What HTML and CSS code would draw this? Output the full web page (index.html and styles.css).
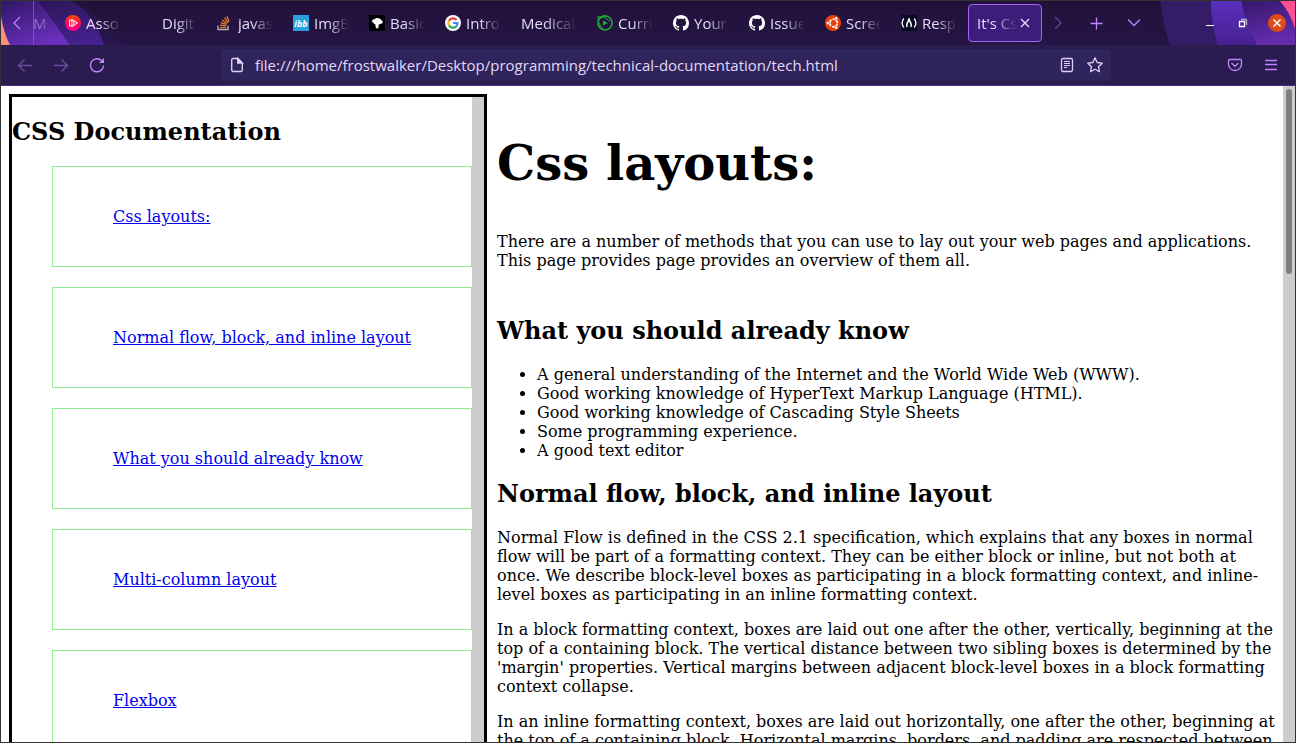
FILE: index.html
```html
<!DOCTYPE html>
<html lang="en">
<head>
<meta charset="utf-8">
<title>It's Css</title>
<link rel="stylesheet" href="styles.css">
</head>
<body>
<div class="window">
  <header class="tabbar">
    <svg class="art art-left" width="130" height="44" viewBox="1 1 130 44" aria-hidden="true">
      <defs>
        <linearGradient id="a" x1="0" y1="0" x2="0.6" y2="1"><stop offset="0" stop-color="#2e1765"/><stop offset="1" stop-color="#6b2fbd"/></linearGradient>
        <linearGradient id="b" x1="0" y1="0" x2="0.5" y2="1"><stop offset="0" stop-color="#2c1557"/><stop offset="1" stop-color="#44218c"/></linearGradient>
      </defs>
      <path d="M70 1Q100 12 124 45H60Z" fill="#2a154d" opacity=".7"/>
      <path d="M36 1H72Q94 14 104 45H60Z" fill="url(#b)"/>
      <path d="M1 1H38L70 45H1Z" fill="url(#a)"/>
      <path d="M1 16Q4 34 10 45H1Z" fill="#ff8f7c"/>
    </svg>
    <svg class="art art-right" width="145" height="44" viewBox="1150 1 145 44" aria-hidden="true">
      <defs>
        <linearGradient id="c" x1="0" y1="0" x2="0" y2="1"><stop offset="0" stop-color="#5b2fc0"/><stop offset="1" stop-color="#46218f"/></linearGradient>
        <linearGradient id="d" x1="0" y1="0" x2="0.3" y2="1"><stop offset="0" stop-color="#33186a"/><stop offset="1" stop-color="#652cad"/></linearGradient>
      </defs>
      <path d="M1160 1Q1163 25 1170 45H1295V1Z" fill="#351c66"/>
      <path d="M1211 1Q1211 25 1218 45H1260L1241 1Z" fill="url(#c)"/>
      <path d="M1241 1Q1246 24 1257 45H1295V1Z" fill="url(#d)"/>
      <path d="M1280 1Q1291 14 1295 29V1Z" fill="#ff4f95"/>
    </svg>
    <button class="scroll-left" aria-label="Scroll tabs left"><svg width="16" height="16" viewBox="0 0 16 16"><path d="M11 2L5 8l6 6"/></svg></button>
    <nav class="tabs" aria-label="Tabs">
      <button class="tab clipped"><span class="label">M</span></button>
      <button class="tab"><svg class="fav" viewBox="0 0 16 16"><defs><linearGradient id="r" x1="0" y1="0" x2="0" y2="1"><stop offset="0" stop-color="#ff4b00"/><stop offset=".5" stop-color="#ff0a50"/><stop offset="1" stop-color="#ff0090"/></linearGradient></defs><circle cx="8" cy="8" r="8" fill="url(#r)"/><path d="M4.500 5v6M4.500 5H7v6H4.500M7 4.500l5.500 3.500L7 11.500M9 6v4" fill="none" stroke="#fff"/></svg><span class="label">Asso</span></button>
      <button class="tab"><span class="fav"></span><span class="label">Digit</span></button>
      <button class="tab"><svg class="fav" viewBox="0 0 16 16" fill="none"><path d="M1 10.500v4h10v-4" stroke="#bcbbbb" stroke-width="1.300"/><path d="M3 12.500h6M3.100 10.200l6 .7M3.800 7.600l5.600 1.900M5.200 4.900l4.700 3.600M7.500 2.700l3.600 4.900M10 1.200l2 5.500" stroke="#f48024" stroke-width="1.200"/></svg><span class="label">javas</span></button>
      <button class="tab"><svg class="fav" viewBox="0 0 16 16"><path fill="#2a9fdc" d="M0 0h16v16H0z"/><text x="8" y="12" class="ibb">ibb</text></svg><span class="label">ImgB</span></button>
      <button class="tab"><svg class="fav" viewBox="0 0 16 16"><path d="M0 0h16v16H0z"/><path fill="#fff" d="M2.500 7L4 4.500 6 4l1-1 3 .2 2 1.300 2 2.500-1 1.500-2 .5-1.500 1v3l-2 .5-1-2V9.500L5 9 4.500 7.500Z"/></svg><span class="label">Basic</span></button>
      <button class="tab"><svg class="fav" viewBox="0 0 16 16" fill="none" stroke-width="2.200"><circle cx="8" cy="8" r="8" fill="#fff"/><path d="M11.600 5A4.600 4.600 0 0 0 4 5.700" stroke="#ea4335"/><path d="M4 5.700a4.700 4.700 0 0 0 0 4.600" stroke="#fbbc05"/><path d="M4 10.300a4.600 4.600 0 0 0 7 1.300" stroke="#34a853"/><path d="M11 11.600A4.500 4.500 0 0 0 12.600 8H8" stroke="#4285f4"/></svg><span class="label">Intro</span></button>
      <button class="tab"><span class="label">Medical-</span></button>
      <button class="tab"><svg class="fav" viewBox="0 0 16 16" fill="none" stroke="#1fae32"><path d="M3.500 2.600A7 7 0 0 1 15 8a7 7 0 0 1-7 7A7 7 0 0 1 1 8Q1 5 3.500 2.600" stroke-width="1.500"/><path d="M1 1.500Q7 1 13 6M1 1.500Q.5 9 7 15" stroke-width="1"/><path d="M6 5.500l5 2.500-5 2.500Z" fill="#1fae32" stroke="none"/></svg><span class="label">Curri</span></button>
      <button class="tab"><svg class="fav" viewBox="0 0 16 16" fill="#fff"><path id="gh" d="M8 0C3.580 0 0 3.580 0 8c0 3.540 2.290 6.530 5.470 7.590.4.070.55-.17.55-.38 0-.19-.01-.82-.01-1.490-2.010.37-2.530-.49-2.690-.94-.09-.23-.48-.94-.82-1.130-.28-.15-.68-.52-.01-.53.63-.01 1.080.58 1.230.82.72 1.210 1.870.87 2.330.66.07-.52.28-.87.51-1.070-1.780-.2-3.640-.89-3.640-3.950 0-.87.31-1.590.82-2.150-.08-.2-.36-1.020.08-2.120 0 0 .67-.21 2.200.82.64-.18 1.320-.27 2-.27s1.360.09 2 .27c1.530-1.040 2.200-.82 2.200-.82.44 1.100.16 1.920.08 2.120.51.56.82 1.270.82 2.150 0 3.070-1.870 3.750-3.650 3.950.29.25.54.73.54 1.480 0 1.070-.01 1.930-.01 2.200 0 .21.15.46.55.38A8.010 8.010 0 0 0 16 8c0-4.420-3.580-8-8-8Z"/></svg><span class="label">Your</span></button>
      <button class="tab"><svg class="fav" viewBox="0 0 16 16" fill="#fff"><use href="#gh"/></svg><span class="label">Issue</span></button>
      <button class="tab"><svg class="fav" viewBox="0 0 16 16"><circle cx="8" cy="8" r="8" fill="#e93f0a"/><circle cx="8.500" cy="8" r="3.800" fill="none" stroke="#fff" stroke-width="1.700" stroke-dasharray="6.760 1.200" stroke-dashoffset="-.6"/><g fill="#fff" stroke="#e93f0a" stroke-width=".6"><circle cx="2.900" cy="8" r="1.600"/><circle cx="11.200" cy="3.300" r="1.600"/><circle cx="11.200" cy="12.700" r="1.600"/></g></svg><span class="label">Scree</span></button>
      <button class="tab"><svg class="fav" viewBox="0 0 16 16" fill="none" stroke="#fff"><path fill="#0a0a23" stroke="none" d="M0 0h16v16H0z"/><path d="M2.800 3.500Q-.6 8 2.800 12.500M13.200 3.500Q16.600 8 13.200 12.500" stroke-width="1.300"/><path d="M8 3.500Q7.500 6 6.300 8T6.300 12M8 3.500Q8.500 6 9.700 8T9.700 12" stroke-width="1.500"/></svg><span class="label">Resp</span></button>
      <button class="tab active"><span class="label">It's Css</span><svg class="close" width="16" height="16" viewBox="0 0 16 16"><path d="M4 4l8 8M12 4l-8 8"/></svg></button>
    </nav>
    <div class="tab-tools">
      <button class="dim" aria-label="Scroll tabs right"><svg width="16" height="16" viewBox="0 0 16 16"><path d="M5 2l6 6-6 6"/></svg></button>
      <button aria-label="New tab"><svg width="16" height="16" viewBox="0 0 16 16"><path d="M8.500 2.500v12M2.500 8.500h12"/></svg></button>
      <button aria-label="List all tabs"><svg width="16" height="16" viewBox="0 0 16 16"><path d="M2 4.500l6 6 6-6"/></svg></button>
    </div>
    <div class="win-tools">
      <button aria-label="Minimize"><svg width="16" height="16" viewBox="0 0 16 16"><path d="M4 10.500h8" stroke-width="1"/></svg></button>
      <button aria-label="Restore"><svg width="16" height="16" viewBox="0 0 16 16" stroke-width="1"><path d="M4.500 6.500h5v5h-5z"/><path d="M6 4.500h5.500V10" opacity=".6"/></svg></button>
      <button class="win-close" aria-label="Close"><svg width="16" height="16" viewBox="0 0 16 16"><path d="M4.500 4.500l7 7M11.500 4.500l-7 7" stroke-width="1.500"/></svg></button>
    </div>
  </header>

  <div class="toolbar">
    <div class="nav-tools">
      <button class="dim" aria-label="Back"><svg width="16" height="16" viewBox="0 0 16 16"><path d="M15 8.500H2M7.500 2.500l-6 6 6 6"/></svg></button>
      <button class="dim" aria-label="Forward"><svg width="16" height="16" viewBox="0 0 16 16"><path d="M1 8.500h13M8.500 2.500l6 6-6 6"/></svg></button>
      <button aria-label="Reload"><svg width="16" height="16" viewBox="0 0 16 16"><path d="M12.900 4A6.500 6.500 0 1 0 14.500 8.500" stroke-width="1.400"/><path d="M15 1v5h-5Z" fill="currentColor" stroke="none"/></svg></button>
    </div>
    <div class="urlbar">
      <svg width="16" height="16" viewBox="0 0 16 16"><path d="M2.700 3a1.500 1.500 0 0 1 1.500-1.500H9L13.300 6v7a1.500 1.500 0 0 1-1.500 1.500H4.200A1.500 1.500 0 0 1 2.700 13Z" stroke-width="1.400"/><path d="M8.700 1.500V6h4.600Z" fill="currentColor"/></svg>
      <input type="text" aria-label="Address" value="file:///home/frostwalker/Desktop/programming/technical-documentation/tech.html">
      <button aria-label="Reader view"><svg width="16" height="16" viewBox="0 0 16 16"><rect x="2.500" y="1.500" width="11" height="13" rx="1.500"/><path d="M5 4.500h6M5 6.500h6M5 8.500h6M5 10.500h3" stroke-width="1"/></svg></button>
      <button aria-label="Bookmark"><svg width="16" height="16" viewBox="0 0 16 16"><path d="M8 .9l2.200 4.600 5 .7-3.700 3.500.9 5L8 12.300l-4.400 2.400.9-5L.8 6.200l5-.7Z" stroke-linejoin="round"/></svg></button>
    </div>
    <div class="side-tools">
      <button aria-label="Pocket"><svg width="16" height="16" viewBox="0 0 16 16"><path d="M1.500 3.500a1 1 0 0 1 1-1h11a1 1 0 0 1 1 1V7a6.500 6.500 0 0 1-13 0Z"/><path d="M4.500 6L8 9.300 11.500 6"/></svg></button>
      <button aria-label="Menu"><svg width="16" height="16" viewBox="0 0 16 16"><path d="M2 3.500h12M2 7.500h12M2 12.500h12"/></svg></button>
    </div>
  </div>

  <div class="viewport">
    <div class="page">
      <nav class="sidebar">
        <div class="sidebar-body">
          <h2>CSS Documentation</h2>
          <ul>
            <li><a href="#layouts">Css layouts:</a></li>
            <li><a href="#flow">Normal flow, block, and inline layout</a></li>
            <li><a href="#know">What you should already know</a></li>
            <li><a href="#columns">Multi-column layout</a></li>
            <li><a href="#flexbox">Flexbox</a></li>
          </ul>
        </div>
        <div class="track"></div>
      </nav>
      <main>
        <h1 id="layouts">Css layouts:</h1>
        <p class="intro">There are a number of methods that you can use to lay out your web pages and applications. This page provides page provides an overview of them all.</p>
        <h2 id="know">What you should already know</h2>
        <ul>
          <li>A general understanding of the Internet and the World Wide Web (WWW).</li>
          <li>Good working knowledge of HyperText Markup Language (HTML).</li>
          <li>Good working knowledge of Cascading Style Sheets</li>
          <li>Some programming experience.</li>
          <li>A good text editor</li>
        </ul>
        <h2 id="flow">Normal flow, block, and inline layout</h2>
        <p>Normal Flow is defined in the CSS 2.1 specification, which explains that any boxes in normal flow will be part of a formatting context. They can be either block or inline, but not both at once. We describe block-level boxes as participating in a block formatting context, and inline-level boxes as participating in an inline formatting context.</p>
        <p>In a block formatting context, boxes are laid out one after the other, vertically, beginning at the top of a containing block. The vertical distance between two sibling boxes is determined by the 'margin' properties. Vertical margins between adjacent block-level boxes in a block formatting context collapse.</p>
        <p>In an inline formatting context, boxes are laid out horizontally, one after the other, beginning at the top of a containing block. Horizontal margins, borders, and padding are respected between</p>
      </main>
    </div>
    <div class="track page-track"><div class="thumb"></div></div>
  </div>
</div>
</body>
</html>
```
FILE: styles.css
```css
* { box-sizing: border-box; }
body { margin: 0; font: 16px/19px "DejaVu Serif", serif; color: #000; }
button { background: none; border: 0; padding: 0; margin: 0; color: inherit; font: inherit; display: flex; align-items: center; justify-content: center; }
svg { display: block; flex: none; }
.window { height: 100vh; display: flex; flex-direction: column; border: 1px solid #333; overflow: hidden; }

.tabbar, .toolbar { flex: none; display: flex; align-items: center; color: #c084ff; font: 500 15px/20px "Open Sans", sans-serif; }
.tabbar button > svg:not(.fav), .toolbar svg { fill: none; stroke: currentColor; stroke-width: 1.3; }
.tabbar { position: relative; height: 44px; background: linear-gradient(#211139, #251545); }
.tabbar > * { position: relative; }
.tabbar > .art { position: absolute; top: 0; }
.art-left { left: 0; }
.art-right { right: 0; }
.scroll-left { width: 32px; height: 44px; flex: none; }
.tabs { flex: 0 1 1009px; height: 44px; display: flex; align-items: center; justify-content: flex-end; overflow: hidden; border-left: 1px solid #77589c; }
.tab { flex: none; width: 74px; height: 38px; margin-right: 2px; padding: 0 8px; justify-content: flex-start; gap: 5px; color: #e6dcf6; border: 1px solid transparent; border-radius: 4px; }
.tab .label { flex: 1; min-width: 0; overflow: hidden; white-space: nowrap; text-align: left; mask-image: linear-gradient(90deg, #000 40%, transparent); }
.clipped { width: 22px; padding: 0; }
.clipped .label { opacity: .4; }
.fav { width: 16px; height: 16px; flex: none; }
.ibb { font: italic bold 9px "Open Sans", sans-serif; fill: #fff; text-anchor: middle; }
.active { background: #3c1d7c; border-color: #a566f2; margin-right: 0; gap: 0; }
.tab-tools { display: flex; gap: 22px; margin-left: 8px; }
.win-tools { display: flex; align-items: center; gap: 17px; margin-left: auto; margin-right: 9px; color: #fff; }
.win-close { width: 18px; height: 18px; border-radius: 50%; background: #e0491a; }
.dim { opacity: .45; }

.toolbar { height: 41px; background: #2a1c4f; border-bottom: 1px solid #44307a; gap: 16px; }
.nav-tools { display: flex; gap: 20px; padding-left: 16px; flex: none; }
.urlbar { flex: 0 1 890px; margin-left: 100px; height: 32px; display: flex; align-items: center; gap: 12px; padding: 0 8px; border-radius: 4px; background: #2f245c; color: #dccff5; }
.urlbar input { flex: 1; min-width: 0; border: 0; padding: 0; margin-left: -2px; background: none; color: #e2d8f5; font: inherit; outline: 0; }
.side-tools { display: flex; gap: 20px; margin-left: auto; padding-right: 16px; flex: none; }

.viewport { flex: 1; min-height: 0; display: flex; background: #fff; }
.page { flex: 1; min-width: 0; overflow: hidden; display: grid; grid-template-columns: 478px 1fr; padding: 8px 8px 0; }
.track { width: 12px; flex: none; background: #cdcdcd; }
.page-track { padding: 3px; }
.thumb { height: 185px; border-radius: 3px; background: #7d7f7f; }
.sidebar { display: flex; border: 3px solid #000; border-bottom: 0; min-height: 0; }
.sidebar-body { flex: 1; min-width: 0; }
h2 { margin: 20px 0; font-size: 24px; line-height: 28px; }
.sidebar h2 { line-height: 29px; }
.sidebar ul { margin: 0; padding-left: 40px; list-style: none; }
.sidebar li { border: 1px solid #90ee90; padding: 40px 20px 40px 60px; margin-bottom: 20px; }
a { color: #00e; }
main { padding-left: 10px; min-width: 0; }
h1 { margin: 40px 0; font-size: 48px; line-height: 58px; }
main ul { margin: 0; padding-left: 40px; }
main p { margin: 16px 0; }
main .intro { margin-bottom: 47px; }
```
